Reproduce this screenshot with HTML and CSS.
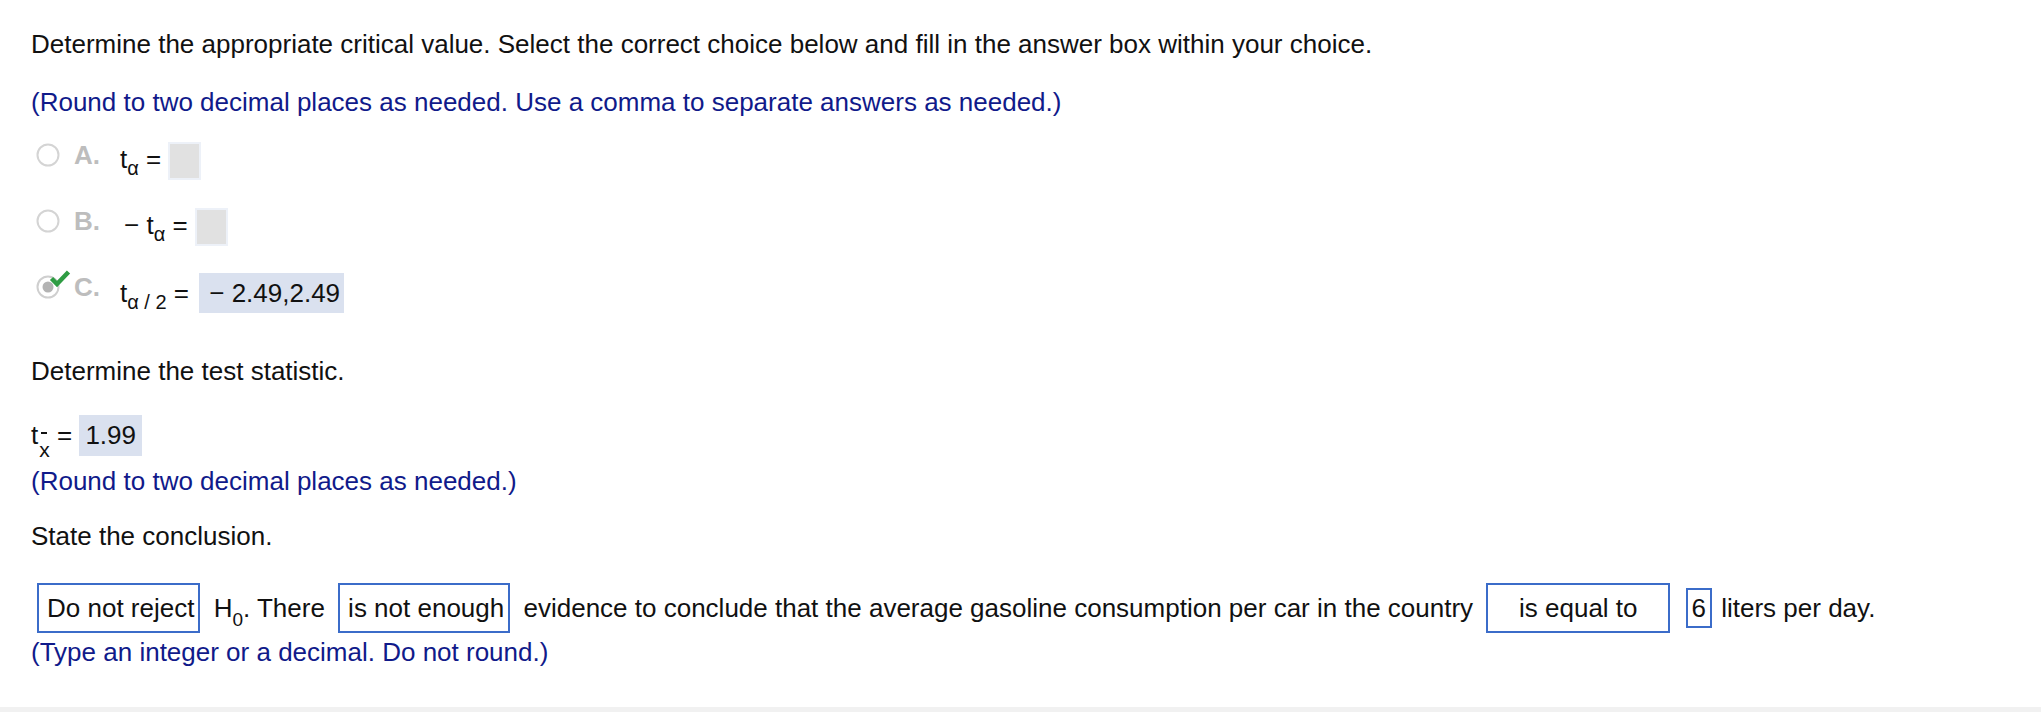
FILE: index.html
```html
<!DOCTYPE html>
<html lang="en">
<head>
<meta charset="utf-8">
<title>Critical value</title>
<link rel="stylesheet" href="styles.css">
</head>
<body>
<div class="page">
  <p class="line">Determine the appropriate critical value. Select the correct choice below and fill in the answer box within your choice.</p>
  <p class="line note l2">(Round to two decimal places as needed. Use a comma to separate answers as needed.)</p>

  <div class="choices">
    <div class="choice">
      <span class="pick">
        <svg class="radio" viewBox="0 0 24 24"><circle cx="12" cy="12" r="10.5" fill="#fff" stroke="#d4d4d4" stroke-width="2"/></svg>
        <span class="letter">A.</span>
      </span>
      <span class="expr">t<sub class="sub">α</sub> = <span class="blank"></span></span>
    </div>
    <div class="choice">
      <span class="pick">
        <svg class="radio" viewBox="0 0 24 24"><circle cx="12" cy="12" r="10.5" fill="#fff" stroke="#d4d4d4" stroke-width="2"/></svg>
        <span class="letter">B.</span>
      </span>
      <span class="expr expr-b">− t<sub class="sub">α</sub> = <span class="blank"></span></span>
    </div>
    <div class="choice">
      <span class="pick">
        <svg class="radio" viewBox="0 0 24 24"><circle cx="12" cy="12" r="10.5" fill="#fff" stroke="#cfcfcf" stroke-width="2"/><circle cx="12" cy="12" r="5.5" fill="#b3b3b3"/></svg>
        <span class="letter">C.</span>
        <svg class="check" viewBox="0 0 22 18"><path d="M2.5 9.5 L8 15 L19.5 3" fill="none" stroke="#2e9c43" stroke-width="4.5"/></svg>
      </span>
      <span class="expr">t<sub class="sub">α / 2</sub> = <span class="value">− 2.49,2.49</span></span>
    </div>
  </div>

  <p class="line section">Determine the test statistic.</p>
  <div class="stat">t<span class="xbar"><span class="bar"></span>x</span> = <span class="valbox">1.99</span></div>
  <p class="line note note-r">(Round to two decimal places as needed.)</p>

  <p class="line state">State the conclusion.</p>
  <div class="concl"><span class="sel first">Do not reject</span> H<sub class="h0sub">0</sub>. There <span class="sel">is not enough</span> evidence to conclude that the average gasoline consumption per car in the country <span class="sel wide">is equal to</span> <span class="sel num">6</span> liters per day.</div>
  <p class="line note type">(Type an integer or a decimal. Do not round.)</p>
</div>
<div class="band"></div>
</body>
</html>
```

FILE: styles.css
```css
html, body {
  margin: 0;
  background: #fff;
}
body {
  font-family: "Liberation Sans", Arial, Helvetica, sans-serif;
  font-size: 26px;
  line-height: 30px;
  color: #111;
}
.page {
  padding: 29px 0 0 31px;
}
p {
  margin: 0;
}
.line {
  white-space: nowrap;
}
.note {
  color: #101a8a;
}
.l2 {
  margin-top: 28px;
}
.choices {
  margin-top: 24px;
  display: flex;
  flex-direction: column;
  gap: 26px;
}
.choice {
  display: flex;
  align-items: center;
  height: 40px;
}
.pick {
  position: relative;
  display: flex;
  align-items: center;
  width: 84px;
  margin-left: 5px;
  margin-bottom: 12px;
  flex: none;
}
.radio {
  width: 24px;
  height: 24px;
  flex: none;
}
.letter {
  margin-left: 14px;
  font-weight: bold;
  color: #bdbdbd;
}
.check {
  position: absolute;
  left: 13px;
  top: -3px;
  width: 22px;
  height: 18px;
}
.expr {
  white-space: nowrap;
}
.expr-b {
  padding-left: 4px;
}
.sub {
  font-size: 20px;
  line-height: 1;
  vertical-align: -7px;
}
.blank {
  display: inline-block;
  width: 29px;
  height: 34px;
  background: #e1e1e1;
  border: 2px solid #edf1f8;
  vertical-align: middle;
}
.value {
  display: inline-block;
  margin-left: 3px;
  padding: 5px 4px 5px 10px;
  line-height: 30px;
  background: #dae1ef;
}
.section {
  margin-top: 43px;
}
.stat {
  margin-top: 29px;
  height: 41px;
  white-space: nowrap;
}
.xbar {
  display: inline-block;
  font-size: 21px;
  line-height: 21px;
  vertical-align: -13px;
  text-align: center;
  margin-left: 1px;
}
.bar {
  display: block;
  width: 6px;
  height: 2px;
  background: #111;
  margin: 0 auto 5px;
}
.valbox {
  display: inline-block;
  padding: 5px 6px;
  line-height: 31px;
  background: #dae1ef;
}
.note-r {
  margin-top: 10px;
}
.state {
  margin-top: 25px;
}
.concl {
  margin-top: 32px;
  white-space: nowrap;
}
.sel {
  display: inline-block;
  border: 2px solid #3b6cc9;
  padding: 8px 4px 8px 8px;
  margin: 0 6px;
  line-height: 30px;
}
.first {
  margin-left: 6px;
}
.wide {
  width: 180px;
  padding-left: 0;
  padding-right: 0;
  text-align: center;
}
.num {
  padding: 3px 4px;
  margin: 0 2px;
}
.h0sub {
  font-size: 19px;
  line-height: 1;
  vertical-align: -9px;
}
.type {
  margin-top: 4px;
}
.band {
  margin-top: 40px;
  height: 5px;
  background: #f1f1f1;
}
```
